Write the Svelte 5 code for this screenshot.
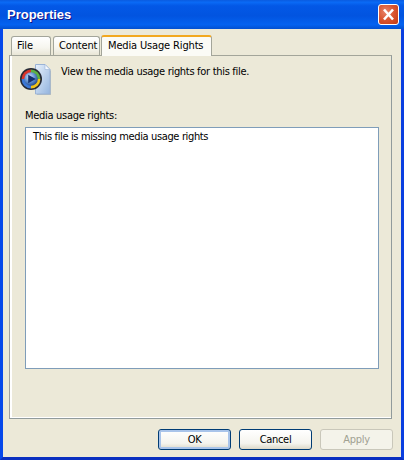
<script>
  const tabs = [
    { label: 'File', cls: 'file' },
    { label: 'Content', cls: 'content' },
    { label: 'Media Usage Rights', cls: 'media', active: true }
  ];
</script>

<div class="window">
  <header class="titlebar">
    <span class="title">Properties</span>
    <button class="close" aria-label="Close">
      <svg viewBox="0 0 21 21" width="21" height="21">
        <path d="M6 5.5 L15 15.5 M15 5.5 L6 15.5" stroke="#fff" stroke-width="2.6" fill="none"/>
      </svg>
    </button>
  </header>

  <div class="client">
    <div class="tabs">
      {#each tabs as tab}
        <div class="tab {tab.cls}" class:active={tab.active}>{tab.label}</div>
      {/each}
    </div>

    <section class="panel">
      <div class="intro">
        <svg class="wmp" viewBox="0 0 32 32" width="32" height="32">
          <defs>
            <linearGradient id="page" x1="0" y1="0" x2="1" y2="1">
              <stop offset="0" stop-color="#e8f1fc"/>
              <stop offset="1" stop-color="#93b4de"/>
            </linearGradient>
            <radialGradient id="disc" cx="0.4" cy="0.35" r="0.7">
              <stop offset="0" stop-color="#d7e6f8"/>
              <stop offset="0.55" stop-color="#5f8fd0"/>
              <stop offset="1" stop-color="#1c3f86"/>
            </radialGradient>
          </defs>
          <path d="M16 1 H25 L30 6 V30 H16 Z" fill="#6d7c96" opacity="0.4" transform="translate(1 1)"/>
          <path d="M15.5 0.5 H25 L30 5.5 V30 H15.5 Z" fill="url(#page)" stroke="#9ab3d6"/>
          <path d="M25 0.5 V5.5 H30 Z" fill="#f6f9fe" stroke="#9ab3d6" stroke-width="0.6"/>
          <circle cx="11" cy="15" r="11" fill="#262a36"/>
          <path d="M1.6 15 A9.4 9.4 0 0 1 11 5.6 V9 A6 6 0 0 0 5 15 Z" fill="#d9352b"/>
          <path d="M11 5.6 A9.4 9.4 0 0 1 20.4 15 H17 A6 6 0 0 0 11 9 Z" fill="#5db043"/>
          <path d="M20.4 15 A9.4 9.4 0 0 1 11 24.4 V21 A6 6 0 0 0 17 15 Z" fill="#f0c419"/>
          <path d="M11 24.4 A9.4 9.4 0 0 1 1.6 15 H5 A6 6 0 0 0 11 21 Z" fill="#3b78d8"/>
          <circle cx="11" cy="15" r="6.8" fill="url(#disc)"/>
          <path d="M8.2 10.8 L15.8 15 L8.2 19.2 Z" fill="#14306e"/>
        </svg>
        <p>View the media usage rights for this file.</p>
      </div>

      <div class="field">
        <label class="field-label" for="rights">Media usage rights:</label>
        <div class="listbox" id="rights">This file is missing media usage rights</div>
      </div>
    </section>

    <footer class="buttons">
      <button class="btn default">OK</button>
      <button class="btn">Cancel</button>
      <button class="btn disabled" disabled>Apply</button>
    </footer>
  </div>
</div>

<style>
  :global(body) {
    margin: 0;
    background: #fff;
  }
  .window {
    width: 404px;
    height: 460px;
    box-sizing: border-box;
    display: flex;
    flex-direction: column;
    font-family: "DejaVu Sans", "Liberation Sans", sans-serif;
    font-stretch: condensed;
    font-size: 11px;
    letter-spacing: -0.3px;
    color: #000;
    background: #0831d9;
  }
  .titlebar {
    height: 29px;
    flex: none;
    display: flex;
    align-items: center;
    justify-content: space-between;
    padding: 0 5px 0 7px;
    box-sizing: border-box;
    background: linear-gradient(180deg, #0a5be0 0%, #0a6af5 8%, #0358e6 20%, #0254e0 55%, #0462f0 85%, #0350d0 100%);
  }
  .title {
    color: #fff;
    font-family: "Liberation Sans", sans-serif;
    font-stretch: normal;
    letter-spacing: 0;
    font-weight: 700;
    font-size: 13px;
    text-shadow: 1px 1px 0 #0f1089;
  }
  .close {
    width: 21px;
    height: 21px;
    padding: 0;
    display: flex;
    box-sizing: border-box;
    border: 1px solid #fff;
    border-radius: 3px;
    background: radial-gradient(circle at 35% 35%, #e8846a 0%, #d9542f 50%, #c23a14 100%);
    overflow: hidden;
  }
  .close svg {
    margin: -1px;
    flex: none;
  }
  .client {
    flex: 1;
    display: flex;
    flex-direction: column;
    padding: 6px 9px 0 6px;
    background: #ece9d8;
    min-height: 0;
    border: 3px solid #0831d9;
    border-top: none;
    border-left-color: #0648ea;
    border-right-color: #0a3fe0;
    border-bottom-color: #0a2fc0;
  }
  .tabs {
    display: flex;
    align-items: flex-end;
    height: 21px;
    padding-left: 2px;
    flex: none;
    position: relative;
    z-index: 1;
  }
  .tab {
    box-sizing: border-box;
    height: 19px;
    line-height: 18px;
    padding-left: 5px;
    letter-spacing: -0.15px;
    border: 1px solid #a3a59a;
    border-bottom: none;
    border-radius: 3px 3px 0 0;
    background: linear-gradient(180deg, #fff 0%, #f6f5ee 60%, #e9e6d6 100%);
    margin-bottom: 1px;
  }
  .file { width: 40px; margin-right: 2px; }
  .content { width: 47px; margin-right: 1px; }
  .media {
    width: 111px;
    height: 21px;
    margin-bottom: 0;
    padding-left: 6px;
    line-height: 18px;
    background: #fbfbf6;
    border-top: 2px solid #f2a81f;
    border-color: #a3a59a;
    border-top-color: #f2a81f;
  }
  .panel {
    height: 364px;
    flex: none;
    box-sizing: border-box;
    display: flex;
    flex-direction: column;
    padding: 8px 12px 49px 10px;
    border: 1px solid #919b9c;
    border-top-color: #a3a59a;
    border-left-color: #a0a0a0;
    box-shadow: inset 2px 0 0 #fff, inset 0 -1px 0 #fff;
    margin-top: -1px;
  }
  .intro {
    display: flex;
    gap: 9px;
    height: 44px;
    flex: none;
  }
  .wmp {
    flex: none;
  }
  .intro p {
    margin: 1px 0 0;
  }
  .field {
    flex: 1;
    display: flex;
    flex-direction: column;
    margin-left: 5px;
  }
  .field-label {
    display: block;
    height: 19px;
    line-height: 16px;
    flex: none;
  }
  .listbox {
    flex: 1;
    background: #fff;
    border: 1px solid #7f9db9;
    padding: 2px 7px;
    line-height: 14px;
    letter-spacing: -0.36px;
  }
  .buttons {
    display: flex;
    justify-content: flex-end;
    gap: 8px;
    margin-top: 10px;
    margin-right: -1px;
  }
  .btn {
    width: 73px;
    height: 21px;
    padding: 0;
    font: inherit;
    letter-spacing: inherit;
    color: #000;
    border: 1px solid #003c74;
    border-radius: 3px;
    background: linear-gradient(180deg, #fff 0%, #f5f4ee 70%, #dcd8c8 100%);
  }
  .default {
    box-shadow: inset 0 0 0 2px #a9c4ea;
  }
  .disabled {
    color: #a1a192;
    border-color: #c9c7ba;
    background: #f4f3ea;
  }
</style>
